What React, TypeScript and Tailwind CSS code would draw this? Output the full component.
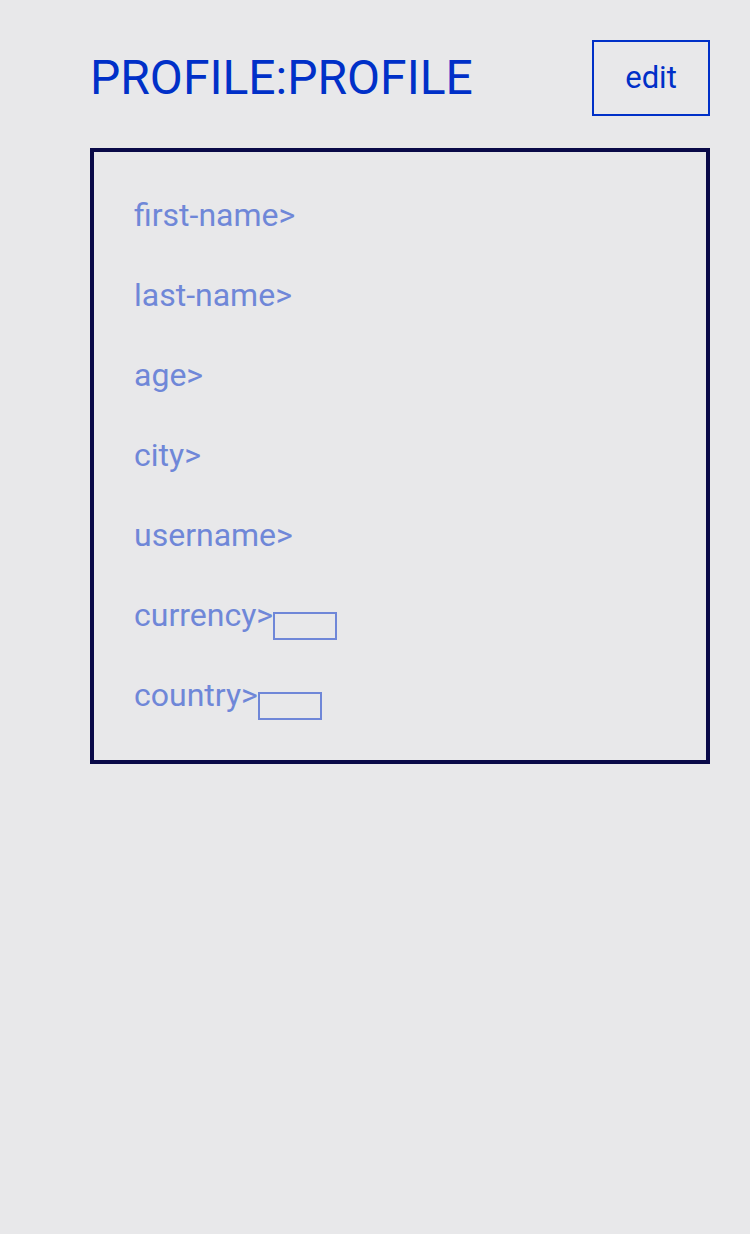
const fields = [
  { label: "first-name>" },
  { label: "last-name>" },
  { label: "age>" },
  { label: "city>" },
  { label: "username>" },
  { label: "currency>", box: true },
  { label: "country>", box: true },
];

export default function App() {
  return (
    <div className="min-h-[1234px] bg-[#e8e8ea] font-['Roboto',sans-serif]">
      <div className="ml-[90px] w-[620px] pt-[40px]">
        <div className="flex items-center justify-between">
          <h1 className="text-[48px] leading-none text-[#0030c8]">PROFILE:PROFILE</h1>
          <button className="w-[118px] h-[76px] border-2 border-[#0030c8] text-[31px] text-[#0030c8]">
            edit
          </button>
        </div>
        <div className="mt-[32px] border-4 border-[#0a0a48] pl-[40px] pt-[23px] pb-[25px]">
          {fields.map(f => (
            <p key={f.label} className="h-[80px] text-[32px] leading-[80px] text-[#6f87d8]">
              {f.label}
              {f.box && (
                <span className="inline-block w-[64px] h-[28px] border-2 border-[#6f87d8] align-[-14px]" />
              )}
            </p>
          ))}
        </div>
      </div>
    </div>
  );
}
